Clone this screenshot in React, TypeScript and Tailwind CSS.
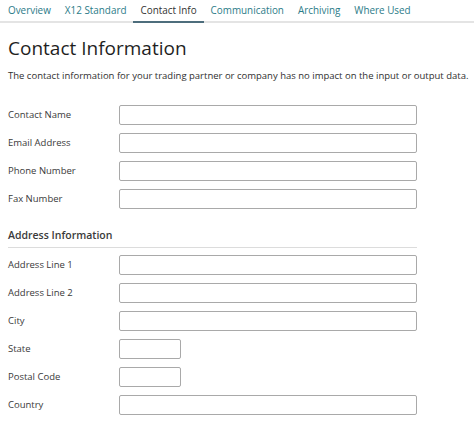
import React from 'react'

const tabs = ['Overview', 'X12 Standard', 'Contact Info', 'Communication', 'Archiving', 'Where Used']

const contactFields = ['Contact Name', 'Email Address', 'Phone Number', 'Fax Number']

const addressFields: { label: string; short?: boolean }[] = [
  { label: 'Address Line 1' },
  { label: 'Address Line 2' },
  { label: 'City' },
  { label: 'State', short: true },
  { label: 'Postal Code', short: true },
  { label: 'Country' },
]

function Field({ label, short }: { label: string; short?: boolean }) {
  return (
    <div className="flex items-center h-[20px]">
      <label className="w-[111px] shrink-0 text-[9.5px] text-[#3a3a3a]">{label}</label>
      <input
        type="text"
        className={`h-[20px] border border-[#a9a9a9] rounded-[2px] bg-white outline-none ${short ? 'w-[62px]' : 'w-[298px]'}`}
      />
    </div>
  )
}

export default function App() {
  return (
    <div className="w-[474px] h-[431px] overflow-hidden bg-white font-['Open_Sans',sans-serif]">
      {/* Tabs */}
      <nav className="flex pl-[1px] border-b-2 border-[#e4e4e4] h-[23px]">
        {tabs.map((t) => {
          const active = t === 'Contact Info'
          return (
            <div
              key={t}
              className={`px-[7px] pt-[3px] text-[9.9px] -mb-[2px] border-b-2 ${
                active ? 'border-[#4d6d7c] text-[#333]' : 'border-transparent text-[#2b7b88]'
              }`}
            >
              {t}
            </div>
          )
        })}
      </nav>

      <div className="px-[8px]">
        <h1 className="mt-[12px] text-[19px] leading-[26px] text-[#1f1f1f]">Contact Information</h1>
        <p className="mt-[8px] text-[9.5px] text-[#2f2f2f] whitespace-nowrap">
          The contact information for your trading partner or company has no impact on the input or output data.
        </p>

        {/* Contact fields */}
        <div className="mt-[22px] flex flex-col gap-[8px]">
          {contactFields.map((f) => (
            <Field key={f} label={f} />
          ))}
        </div>

        {/* Address */}
        <div className="mt-[19px] w-[409px] border-b border-[#dcdcdc] pb-[3px]">
          <h2 className="text-[10.5px] font-semibold text-[#3a3a3a]">Address Information</h2>
        </div>
        <div className="mt-[7px] flex flex-col gap-[8px]">
          {addressFields.map((f) => (
            <Field key={f.label} label={f.label} short={f.short} />
          ))}
        </div>
      </div>
    </div>
  )
}
